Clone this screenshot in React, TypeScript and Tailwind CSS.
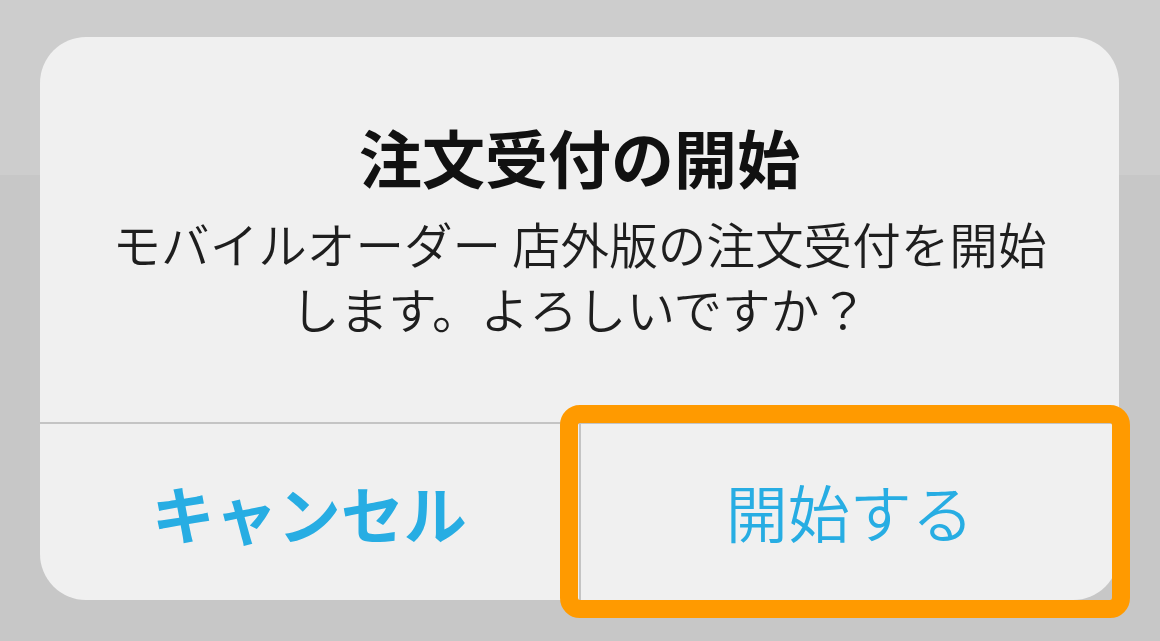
import React from "react";

export default function App() {
  const font = { fontFamily: '"Noto Sans CJK JP", "Noto Sans", sans-serif' };
  return (
    <div
      className="relative w-[1160px] h-[641px] overflow-hidden bg-[linear-gradient(to_bottom,#cdcdcd_175px,#c7c7c7_175px)] pt-[37px] pl-[40px]"
      style={font}
    >
      <div className="w-[1079px] h-[563px] rounded-[46px] bg-[#f0f0f0] flex flex-col overflow-hidden">
        <div className="h-[385px] flex flex-col items-center pt-[79px]">
          <div className="text-[63px] leading-[80px] font-bold text-[#111] whitespace-nowrap">
            注文受付の開始
          </div>
          <div className="mt-[15px] text-[48.6px] leading-[65px] text-[#1e1e1e] text-center whitespace-nowrap font-[350]">
            モバイルオーダー 店外版の注文受付を開始
            <br />
            します。よろしいですか？
          </div>
        </div>
        <div className="h-[2px] bg-[#c4c4c4]" />
        <div className="flex-1 flex">
          <div className="flex-1 flex items-center justify-center text-[63px] font-bold text-[#27ade3] leading-none pb-[2px]">
            キャンセル
          </div>
          <div className="w-[2px] bg-[#c4c4c4]" />
          <div className="flex-1 flex items-center justify-center text-[62px] text-[#27ade3] leading-none pb-[2px] font-[350]">
            開始する
          </div>
        </div>
      </div>
      <div className="absolute left-[560px] top-[405px] w-[570px] h-[213px] rounded-[20px] border-[18px] border-[#ff9a00]" />
    </div>
  );
}
